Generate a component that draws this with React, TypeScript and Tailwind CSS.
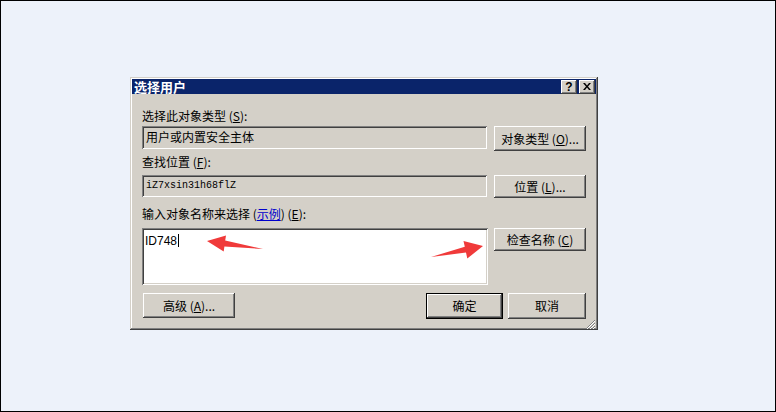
import React from 'react'

const raised =
  'shadow-[inset_-1px_-1px_#404040,inset_1px_1px_#ffffff,inset_-2px_-2px_#808080,inset_2px_2px_#d4d0c8]'
const sunken =
  'shadow-[inset_1px_1px_#808080,inset_-1px_-1px_#ffffff,inset_2px_2px_#404040,inset_-2px_-2px_#d4d0c8]'

function Btn({ children, className = '' }: { children: React.ReactNode; className?: string }) {
  return (
    <div
      className={`flex items-center justify-center bg-[#d4d0c8] text-[12px] leading-[14px] text-black ${raised} ${className}`}
    >
      {children}
    </div>
  )
}

function Arrows() {
  // red annotation arrows drawn over the screenshot
  return (
    <svg className="pointer-events-none absolute left-0 top-0" width="776" height="412">
      <polygon
        points="206,240 225,234.6 224.2,239.5 262,248 223.4,245.5 222.7,250.4"
        fill="#f03a3a"
      />
      <polygon
        points="482,245 462.5,239.9 463.8,245.8 430,256 465,251.6 466.3,257.5"
        fill="#f03a3a"
      />
    </svg>
  )
}

export default function App() {
  return (
    <div className="relative h-[412px] w-[776px] border border-black bg-[#edf2fa] pl-[129px] pt-[76px] font-['Noto_Sans_CJK_SC',sans-serif]">
      <div
        className={`flex h-[253px] w-[468px] flex-col bg-[#d4d0c8] p-[2px] shadow-[inset_-1px_-1px_#404040,inset_1px_1px_#d4d0c8,inset_-2px_-2px_#808080,inset_2px_2px_#ffffff]`}
      >
        {/* title bar */}
        <div className="flex h-[18px] items-center justify-between bg-[#0a246a] pl-[2px] pr-[1px]">
          <span className="text-[13px] font-bold leading-[15px] text-white">选择用户</span>
          <div className="flex gap-[2px]">
            <Btn className="h-[14px] w-[16px] font-['Liberation_Sans',sans-serif] text-[11px] font-bold">?</Btn>
            <Btn className="h-[14px] w-[16px]">
              <svg width="8" height="7" viewBox="0 0 8 7">
                <path d="M0 0h2l2 2.5L6 0h2L5 3.5 8 7H6L4 4.5 2 7H0l3-3.5z" fill="#000" />
              </svg>
            </Btn>
          </div>
        </div>

        <div className="flex flex-col px-[10px] text-[12px] leading-[14px] text-black">
          <div className="mt-[15px]">
            选择此对象类型 (<u>S</u>):
          </div>
          <div className="mt-[3px] flex gap-[7px]">
            <div className={`h-[23px] w-[345px] pl-[4px] pt-[4px] ${sunken}`}>用户或内置安全主体</div>
            <Btn className="h-[25px] w-[92px]">
              对象类型 (<u>O</u>)...
            </Btn>
          </div>

          <div className="mt-[4px]">
            查找位置 (<u>F</u>):
          </div>
          <div className="mt-[6px] flex gap-[7px]">
            <div
              className={`h-[22px] w-[345px] pl-[4px] pt-[4px] font-['Liberation_Mono',monospace] text-[10px] ${sunken}`}
            >
              iZ7xsin31h68flZ
            </div>
            <Btn className="h-[23px] w-[92px]">
              位置 (<u>L</u>)...
            </Btn>
          </div>

          <div className="mt-[9px]">
            输入对象名称来选择 (<span className="text-[#0000cc] underline">示例</span>) (<u>E</u>):
          </div>
          <div className="mt-[7px] flex gap-[6px]">
            <div className={`h-[57px] w-[346px] bg-white pl-[3px] pt-[4px] ${sunken}`}>
              <span className="font-['Liberation_Sans',sans-serif]">ID748</span>
              <span className="ml-[1px] inline-block h-[13px] w-[1px] translate-y-[2px] bg-black" />
            </div>
            <Btn className="h-[23px] w-[92px]">
              检查名称 (<u>C</u>)
            </Btn>
          </div>

          <div className="mt-[8px] flex">
            <Btn className="ml-[1px] h-[25px] w-[92px]">
              高级 (<u>A</u>)...
            </Btn>
            <Btn className="ml-[191px] h-[26px] w-[77px] border border-black">确定</Btn>
            <Btn className="ml-[5px] h-[26px] w-[78px]">取消</Btn>
          </div>
        </div>

        <div className="mt-auto flex justify-end">
          <svg width="11" height="11" viewBox="0 0 11 11">
            <path d="M10 1L1 10M10 4L4 10M10 7L7 10" stroke="#808080" strokeWidth="1" />
            <path d="M10 2L2 10M10 5L5 10M10 8L8 10" stroke="#ffffff" strokeWidth="1" />
          </svg>
        </div>
      </div>
      <Arrows />
    </div>
  )
}
